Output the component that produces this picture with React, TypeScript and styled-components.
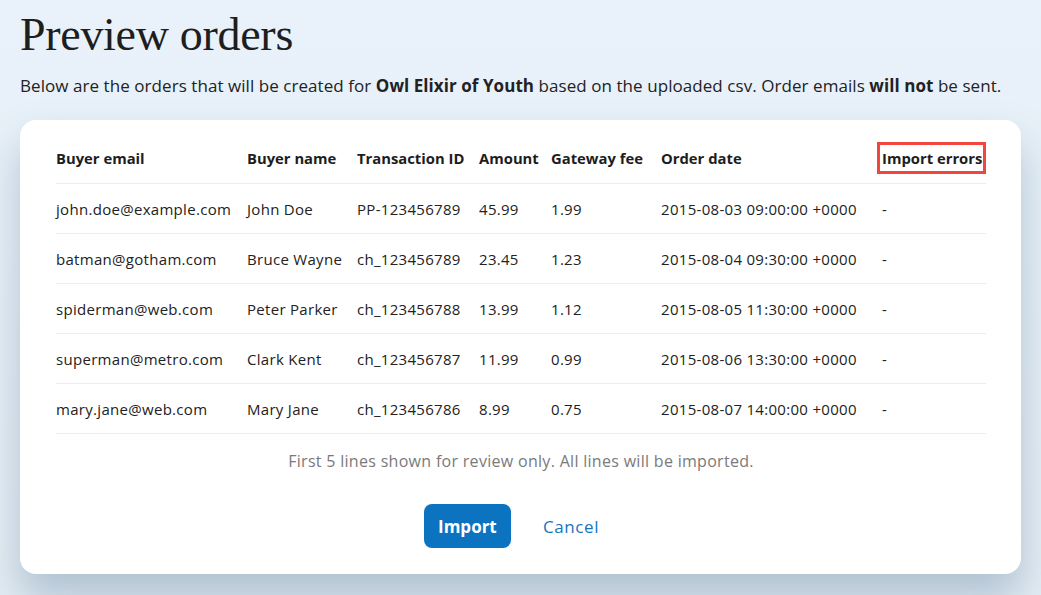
import styled, { createGlobalStyle } from 'styled-components';

const GlobalStyle = createGlobalStyle`
  html, body {
    margin: 0;
    padding: 0;
  }
  body {
    background: linear-gradient(180deg, #e9f2fa 0%, #e4edf4 100%);
    font-family: 'Open Sans', 'Noto Sans', sans-serif;
    color: #1f1f1f;
  }
`;

interface Order {
  email: string;
  name: string;
  txn: string;
  amount: string;
  fee: string;
  date: string;
  errors: string;
}

const orders: Order[] = [
  { email: 'john.doe@example.com', name: 'John Doe', txn: 'PP-123456789', amount: '45.99', fee: '1.99', date: '2015-08-03 09:00:00 +0000', errors: '-' },
  { email: 'batman@gotham.com', name: 'Bruce Wayne', txn: 'ch_123456789', amount: '23.45', fee: '1.23', date: '2015-08-04 09:30:00 +0000', errors: '-' },
  { email: 'spiderman@web.com', name: 'Peter Parker', txn: 'ch_123456788', amount: '13.99', fee: '1.12', date: '2015-08-05 11:30:00 +0000', errors: '-' },
  { email: 'superman@metro.com', name: 'Clark Kent', txn: 'ch_123456787', amount: '11.99', fee: '0.99', date: '2015-08-06 13:30:00 +0000', errors: '-' },
  { email: 'mary.jane@web.com', name: 'Mary Jane', txn: 'ch_123456786', amount: '8.99', fee: '0.75', date: '2015-08-07 14:00:00 +0000', errors: '-' },
];

const columns = [
  { label: 'Buyer email', width: 191 },
  { label: 'Buyer name', width: 110 },
  { label: 'Transaction ID', width: 122 },
  { label: 'Amount', width: 72 },
  { label: 'Gateway fee', width: 110 },
  { label: 'Order date', width: 221 },
  { label: 'Import errors', width: 104, flagged: true },
];

function App() {
  return (
    <>
      <GlobalStyle />
      <Page>
        <Title>Preview orders</Title>
        <Intro>
          Below are the orders that will be created for <strong>Owl Elixir of Youth</strong> based on
          the uploaded csv. Order emails <strong>will not</strong> be sent.
        </Intro>
        <Card>
          <Table>
            <colgroup>
              {columns.map((c) => (
                <col key={c.label} style={{ width: c.width }} />
              ))}
            </colgroup>
            <thead>
              <tr>
                {columns.map((c) => (
                  <HeadCell key={c.label}>
                    {c.flagged ? <Flagged>{c.label}</Flagged> : c.label}
                  </HeadCell>
                ))}
              </tr>
            </thead>
            <tbody>
              {orders.map((o) => (
                <tr key={o.email}>
                  <Cell>{o.email}</Cell>
                  <Cell>{o.name}</Cell>
                  <Cell>{o.txn}</Cell>
                  <Cell>{o.amount}</Cell>
                  <Cell>{o.fee}</Cell>
                  <Cell>{o.date}</Cell>
                  <Cell>{o.errors}</Cell>
                </tr>
              ))}
            </tbody>
          </Table>
          <Note>First 5 lines shown for review only. All lines will be imported.</Note>
          <Actions>
            <PrimaryButton>Import</PrimaryButton>
            <LinkButton>Cancel</LinkButton>
          </Actions>
        </Card>
      </Page>
    </>
  );
}

export default App;

const Page = styled.div`
  padding: 12px 20px 21px;
`;

const Title = styled.h1`
  margin: 0;
  font-family: 'Liberation Serif', 'DejaVu Serif', serif;
  font-weight: 400;
  font-size: 46px;
  line-height: 46px;
  color: #1e1e1e;
  letter-spacing: -0.3px;
`;

const Intro = styled.p`
  margin: 16px 0 0;
  font-size: 17px;
  line-height: 24px;
  letter-spacing: 0.06px;
  color: #222;

  strong {
    font-weight: 700;
  }
`;

const Card = styled.div`
  margin-top: 22px;
  background: #fff;
  border-radius: 16px;
  padding: 13px 35px 26px 36px;
  box-shadow: 0 24px 40px rgba(110, 140, 165, 0.45);
`;

const Table = styled.table`
  width: 930px;
  border-collapse: collapse;
  table-layout: fixed;
`;

const HeadCell = styled.th`
  height: 50px;
  padding: 0;
  text-align: left;
  font-size: 14.8px;
  font-weight: 700;
  color: #1d1d1d;
  border-bottom: 1px solid #ececec;
  white-space: nowrap;
`;

const Flagged = styled.span`
  display: inline-block;
  margin-left: -4px;
  padding: 5px 3px 5px 4px;
  outline: 3px solid #f2453f;
  outline-offset: -2px;
`;

const Cell = styled.td`
  height: 49px;
  padding: 0;
  font-size: 15px;
  letter-spacing: 0.3px;
  color: #222;
  border-bottom: 1px solid #ececec;
  white-space: nowrap;
`;

const Note = styled.p`
  margin: 16px 0 0;
  text-align: center;
  font-size: 16px;
  line-height: 22px;
  letter-spacing: 0.3px;
  color: #7a7a7a;
`;

const Actions = styled.div`
  display: flex;
  justify-content: center;
  align-items: center;
  gap: 32px;
  margin-top: 32px;
  padding-right: 19px;
`;

const PrimaryButton = styled.button`
  height: 44px;
  width: 87px;
  padding: 0;
  border: none;
  border-radius: 8px;
  background: #0b73bf;
  color: #fff;
  font-family: inherit;
  font-size: 17px;
  font-weight: 700;
`;

const LinkButton = styled.button`
  border: none;
  background: none;
  padding: 0;
  color: #1874bd;
  font-family: inherit;
  font-size: 17px;
  letter-spacing: 0.6px;
`;
